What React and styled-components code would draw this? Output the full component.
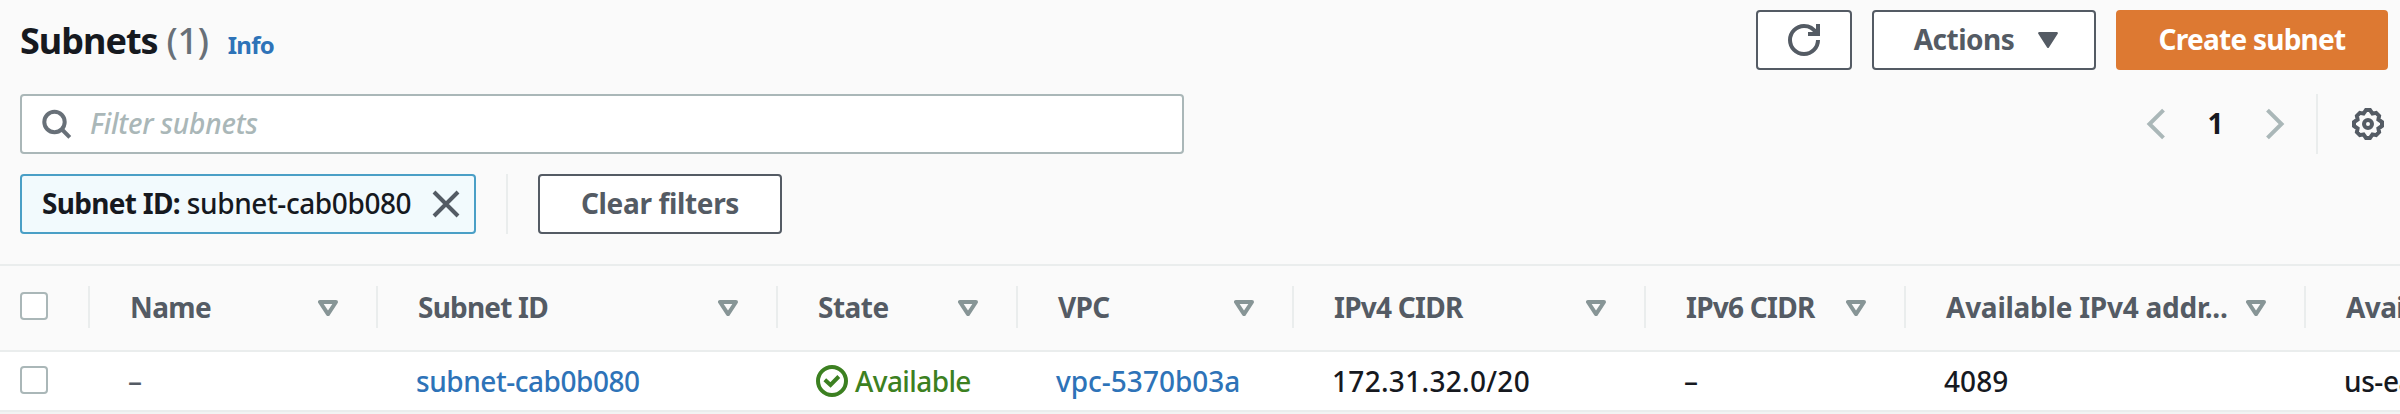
import React from 'react';
import styled, { createGlobalStyle } from 'styled-components';

const color = {
  ink: '#16191f',
  slate: '#545b64',
  gray: '#687078',
  mist: '#aab7b8',
  sort: '#879596',
  line: '#eaeded',
  link: '#2e73b8',
  green: '#3c8021',
  orange: '#dd7932',
};

const GlobalStyle = createGlobalStyle`
  * { box-sizing: border-box; }
  body {
    margin: 0;
    overflow: hidden;
    background: #fafafa;
    color: ${color.ink};
    font: 460 28px/40px 'Noto Sans', 'Open Sans', sans-serif;
    white-space: nowrap;
  }
`;

const Page = styled.main`
  width: 2400px;
  height: 414px;
  overflow: hidden;
  background: #fafafa;
`;

const Toolbar = styled.header`
  height: 264px;
  padding: 10px 12px 0 20px;
`;

const Bar = styled.div`
  display: flex;
  justify-content: space-between;
  height: 60px;
  margin-bottom: ${p => p.$gap || 0}px;
`;

const Heading = styled.div`
  display: flex;
  align-items: baseline;
  height: 60px;
  padding-top: 1px;
  line-height: 60px;
`;

const Title = styled.h1`
  margin: 0;
  font-size: 36px;
  font-weight: 700;
  letter-spacing: -1px;
`;

const Count = styled.span`
  margin-left: 9px;
  font-size: 36px;
  font-weight: 460;
  letter-spacing: -0.3px;
  color: ${color.gray};
`;

const InfoLink = styled.a`
  margin-left: 19px;
  font-size: 24px;
  font-weight: 700;
  letter-spacing: -0.7px;
  color: ${color.link};
`;

const ButtonGroup = styled.div`
  display: flex;
  gap: 20px;
`;

const Button = styled.button`
  display: flex;
  align-items: center;
  justify-content: center;
  width: ${p => p.$width}px;
  height: 60px;
  padding: 0 0 2px;
  border: 2px solid ${p => (p.$primary ? color.orange : color.slate)};
  border-radius: 4px;
  background: ${p => (p.$primary ? color.orange : '#fff')};
  color: ${p => (p.$primary ? '#fff' : color.slate)};
  font: 700 28px/40px 'Noto Sans', 'Open Sans', sans-serif;
  letter-spacing: ${p => p.$track || 0}px;

  svg { margin-top: 2px; }
`;

const MenuButton = styled(Button)`
  padding-left: 4px;
`;

const CaretSlot = styled.span`
  display: flex;
  margin-left: 24px;
`;

const SearchBox = styled.label`
  display: flex;
  align-items: center;
  width: 1164px;
  height: 60px;
  padding-left: 20px;
  border: 2px solid ${color.mist};
  border-radius: 4px;
  background: #fff;
`;

const Placeholder = styled.span`
  padding-bottom: 2px;
  margin-left: 16px;
  font-style: italic;
  letter-spacing: -0.2px;
  color: ${color.mist};
`;

const Pagination = styled.nav`
  display: flex;
  align-items: center;
  padding-right: 4px;
`;

const PageNumber = styled.span`
  width: 99px;
  padding-bottom: 2px;
  text-align: center;
  font-weight: 700;
`;

const Separator = styled.span`
  width: 2px;
  height: 60px;
  margin: ${p => p.$margin};
  background: ${color.line};
`;

const Filters = styled.div`
  display: flex;
`;

const Token = styled.div`
  display: flex;
  align-items: center;
  width: 456px;
  height: 60px;
  padding-left: 20px;
  border: 2px solid #4a9fc6;
  border-radius: 4px;
  background: #f2fafd;

  svg { margin-left: 21px; }
`;

const TokenText = styled.span`
  width: 369px;
  padding-bottom: 2px;
  letter-spacing: -0.4px;
`;

const TokenKey = styled.b`
  font-weight: 700;
  letter-spacing: -0.7px;
`;

const Row = styled.div`
  display: grid;
  grid-template-columns: 88px 288px 400px 240px 276px 352px 260px 400px 288px;
  align-items: center;
  height: ${p => (p.$head ? 88 : 60)}px;
  border-style: solid;
  border-color: ${color.line};
  border-width: ${p => (p.$head ? '2px 0' : '0 0 2px')};
  background: ${p => (p.$head ? '#fafafa' : '#fff')};
`;

const HeadCell = styled.div`
  display: flex;
  align-items: center;
  justify-content: space-between;
  height: 42px;
  padding: 0 38px 0 40px;
  margin-bottom: 2px;
  border-left: 2px solid ${color.line};
  color: ${color.slate};
  font-weight: 700;
  letter-spacing: ${p => p.$track}px;
`;

const SortSlot = styled.span`
  display: flex;
  margin-bottom: -1px;
`;

const Cell = styled.div`
  display: flex;
  align-items: center;
  gap: 7px;
  padding-left: 40px;
  color: ${p => p.$color || color.ink};
  letter-spacing: ${p => p.$track || 0}px;
`;

const CheckCell = styled.div`
  padding-left: 20px;
  padding-bottom: ${p => (p.$head ? 4 : 2)}px;
`;

const Checkbox = styled.span`
  display: block;
  width: 28px;
  height: 28px;
  border: 2px solid ${color.mist};
  border-radius: 4px;
  background: #fff;
`;

const Stripe = styled.div`
  height: 2px;
  background: #f2f3f3;
`;

const SearchIcon = () => (
  <svg width="32" height="32" viewBox="0 0 32 32" fill="none" stroke={color.gray} strokeWidth="4">
    <circle cx="12.5" cy="14" r="10.2" />
    <path d="M19.5 21 27.8 29.3" />
  </svg>
);

const RefreshIcon = () => (
  <svg width="32" height="32" viewBox="0 0 32 32" fill="none" stroke={color.slate} strokeWidth="4">
    <path d="M30 16a14 14 0 1 1-14-14c5 0 9.500 2.500 12 7" />
    <path d="M30 0v10H20" />
  </svg>
);

const CaretIcon = () => (
  <svg width="20" height="16" viewBox="0 0 20 16">
    <path d="M1.2 1.2h17.6L10 14.8Z" fill={color.slate} stroke={color.slate} strokeWidth="2.2" strokeLinejoin="round" />
  </svg>
);

const SortIcon = () => (
  <svg width="20" height="16" viewBox="0 0 20 16" fill="none">
    <path d="M2 2h16l-8 12.200Z" stroke={color.sort} strokeWidth="4" strokeLinejoin="round" />
  </svg>
);

const ChevronIcon = ({ right }) => (
  <svg width="20" height="32" viewBox="0 0 20 32" fill="none" stroke={color.mist} strokeWidth="4">
    <path d={right ? 'M2.5 2.2 16.5 16 2.5 29.8' : 'M17.5 2.2 3.5 16l14 13.8'} />
  </svg>
);

const CloseIcon = () => (
  <svg width="28" height="28" viewBox="0 0 28 28" fill="none" stroke={color.slate} strokeWidth="4">
    <path d="M2 2l24 24M26 2 2 26" />
  </svg>
);

const GearIcon = () => (
  <svg width="32" height="32" viewBox="0 0 32 32" fill="none" stroke={color.slate} strokeWidth="4">
    <path d="M14 2h4l2.500 3.600 3.600-.7 3 3-.7 3.600L30 14v4l-3.600 2.500.7 3.600-3 3-3.600-.7L18 30h-4l-2.500-3.600-3.600.7-3-3 .7-3.600L2 18v-4l3.600-2.500-.7-3.600 3-3 3.600.7Z" />
    <circle cx="16" cy="16" r="4" />
  </svg>
);

const CheckCircleIcon = () => (
  <svg width="32" height="32" viewBox="0 0 32 32" fill="none" stroke={color.green} strokeWidth="4">
    <circle cx="16" cy="16" r="14" />
    <path d="M8.800 14.800l5.700 5.200 8.300-8.500" />
  </svg>
);

const columns = [
  { label: 'Name', track: -0.6 },
  { label: 'Subnet ID', track: -0.8 },
  { label: 'State', track: -0.5 },
  { label: 'VPC', track: -0.7 },
  { label: 'IPv4 CIDR', track: -0.75 },
  { label: 'IPv6 CIDR', track: -0.75 },
  { label: 'Available IPv4 addr...', track: -0.25 },
];

export default function App() {
  return (
    <Page>
      <GlobalStyle />
      <Toolbar>
        <Bar $gap={24}>
          <Heading>
            <Title>Subnets</Title>
            <Count>(1)</Count>
            <InfoLink>Info</InfoLink>
          </Heading>
          <ButtonGroup>
            <Button $width={96} aria-label="Refresh"><RefreshIcon /></Button>
            <MenuButton $width={224} $track={-0.5}>
              Actions
              <CaretSlot><CaretIcon /></CaretSlot>
            </MenuButton>
            <Button $width={272} $primary $track={-0.75}>Create subnet</Button>
          </ButtonGroup>
        </Bar>
        <Bar $gap={20}>
          <SearchBox>
            <SearchIcon />
            <Placeholder>Filter subnets</Placeholder>
          </SearchBox>
          <Pagination>
            <ChevronIcon />
            <PageNumber>1</PageNumber>
            <ChevronIcon right />
            <Separator $margin="0 34px 0 31px" />
            <GearIcon />
          </Pagination>
        </Bar>
        <Filters>
          <Token>
            <TokenText><TokenKey>Subnet ID:</TokenKey> subnet-cab0b080</TokenText>
            <CloseIcon />
          </Token>
          <Separator $margin="0 30px" />
          <Button $width={244} $track={-0.35}>Clear filters</Button>
        </Filters>
      </Toolbar>
      <Row $head>
        <CheckCell $head><Checkbox /></CheckCell>
        {columns.map(c => (
          <HeadCell key={c.label} $track={c.track}>
            {c.label}
            <SortSlot><SortIcon /></SortSlot>
          </HeadCell>
        ))}
        <HeadCell $track={-0.6}>Availability Zone</HeadCell>
      </Row>
      <Row>
        <CheckCell><Checkbox /></CheckCell>
        <Cell $color={color.slate}>–</Cell>
        <Cell $color={color.link} $track={-0.45}>subnet-cab0b080</Cell>
        <Cell $color={color.green} $track={-0.6}><CheckCircleIcon />Available</Cell>
        <Cell $color={color.link}>vpc-5370b03a</Cell>
        <Cell $track={0.3}>172.31.32.0/20</Cell>
        <Cell>–</Cell>
        <Cell $track={0.1}>4089</Cell>
        <Cell $track={-0.4}>us-east-1a</Cell>
      </Row>
      <Stripe />
    </Page>
  );
}
